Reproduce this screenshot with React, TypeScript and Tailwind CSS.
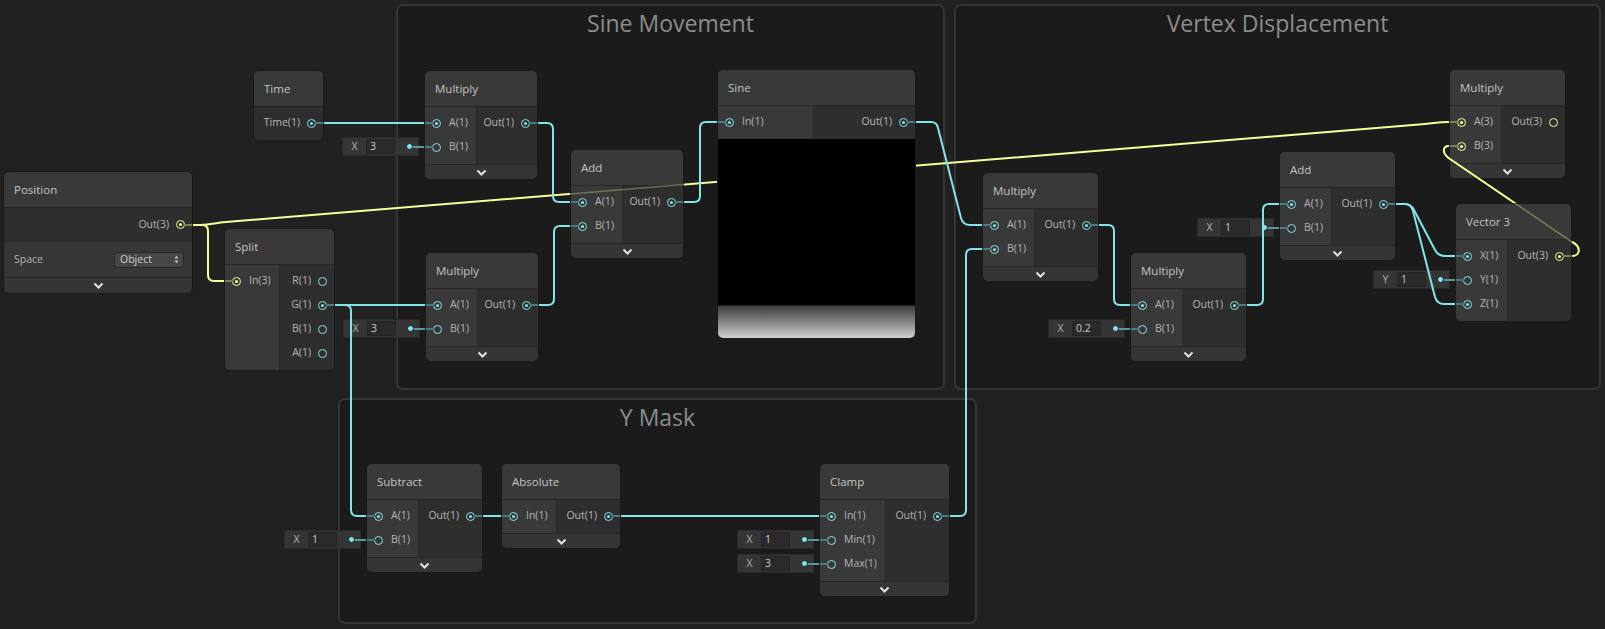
import React from 'react'

type Port = { label: string; v3?: boolean; on?: boolean; field?: [string, string] }
type NodeSpec = {
  title: string
  x: number
  y: number
  w: number
  col?: number
  ins?: Port[]
  outs: Port[]
  footer?: boolean
  preview?: boolean
}

const out1: Port[] = [{ label: 'Out(1)', on: true }]

const NODES: NodeSpec[] = [
  { title: 'Time', x: 253, y: 70, w: 71, outs: [{ label: 'Time(1)', on: true }] },
  {
    title: 'Split', x: 224, y: 228, w: 111, col: 55,
    ins: [{ label: 'In(3)', v3: true, on: true }],
    outs: [{ label: 'R(1)' }, { label: 'G(1)', on: true }, { label: 'B(1)' }, { label: 'A(1)' }],
  },
  { title: 'Multiply', x: 424, y: 70, w: 114, col: 52, ins: [{ label: 'A(1)', on: true }, { label: 'B(1)', field: ['X', '3'] }], outs: out1, footer: true },
  { title: 'Multiply', x: 425, y: 252, w: 114, col: 52, ins: [{ label: 'A(1)', on: true }, { label: 'B(1)', field: ['X', '3'] }], outs: out1, footer: true },
  { title: 'Add', x: 570, y: 149, w: 114, col: 52, ins: [{ label: 'A(1)', on: true }, { label: 'B(1)', on: true }], outs: out1, footer: true },
  { title: 'Sine', x: 717, y: 69, w: 199, col: 96, ins: [{ label: 'In(1)', on: true }], outs: out1, preview: true },
  { title: 'Multiply', x: 982, y: 172, w: 117, col: 52, ins: [{ label: 'A(1)', on: true }, { label: 'B(1)', on: true }], outs: out1, footer: true },
  { title: 'Multiply', x: 1130, y: 252, w: 117, col: 52, ins: [{ label: 'A(1)', on: true }, { label: 'B(1)', field: ['X', '0.2'] }], outs: out1, footer: true },
  { title: 'Add', x: 1279, y: 151, w: 117, col: 52, ins: [{ label: 'A(1)', on: true }, { label: 'B(1)', field: ['X', '1'] }], outs: out1, footer: true },
  {
    title: 'Multiply', x: 1449, y: 69, w: 117, col: 52,
    ins: [{ label: 'A(3)', v3: true, on: true }, { label: 'B(3)', v3: true, on: true }],
    outs: [{ label: 'Out(3)', v3: true }], footer: true,
  },
  {
    title: 'Vector 3', x: 1455, y: 203, w: 117, col: 52,
    ins: [{ label: 'X(1)', on: true }, { label: 'Y(1)', field: ['Y', '1'] }, { label: 'Z(1)', on: true }],
    outs: [{ label: 'Out(3)', v3: true, on: true }],
  },
  { title: 'Subtract', x: 366, y: 463, w: 117, col: 52, ins: [{ label: 'A(1)', on: true }, { label: 'B(1)', field: ['X', '1'] }], outs: out1, footer: true },
  { title: 'Absolute', x: 501, y: 463, w: 120, col: 55, ins: [{ label: 'In(1)', on: true }], outs: out1, footer: true },
  {
    title: 'Clamp', x: 819, y: 463, w: 131, col: 66,
    ins: [{ label: 'In(1)', on: true }, { label: 'Min(1)', field: ['X', '1'] }, { label: 'Max(1)', field: ['X', '3'] }],
    outs: out1, footer: true,
  },
]

const GROUPS = [
  { title: 'Sine Movement', x: 396, y: 4, w: 549, h: 386 },
  { title: 'Vertex Displacement', x: 954, y: 4, w: 647, h: 386 },
  { title: 'Y Mask', x: 338, y: 398, w: 639, h: 226 },
]

// wires drawn on top of the nodes
const CYAN_WIRES = [
  'M324,123 H424',
  'M538,123 H547 Q553,123 553,129 V196 Q553,202 559,202 H570',
  'M539,305 H548 Q554,305 554,299 V232 Q554,226 560,226 H570',
  'M684,202 H694 Q700,202 700,196 V128 Q700,122 706,122 H717',
  'M916,122 H931 Q937,122 938,128 L961,218 Q963,225 970,225 H982',
  'M335,305 H425',
  'M335,305 H345 Q351,305 351,311 V510 Q351,516 357,516 H366',
  'M1099,225 H1108 Q1114,225 1114,231 V299 Q1114,305 1120,305 H1130',
  'M1247,305 H1257 Q1263,305 1263,299 V210 Q1263,204 1269,204 H1279',
  'M1396,204 H1405 Q1411,204 1414,210 L1435,250 Q1438,256 1445,256 H1455',
  'M1396,204 H1405 Q1411,204 1413,211 L1435,297 Q1437,304 1444,304 H1455',
  'M483,516 H501',
  'M621,516 H819',
  'M950,516 H960 Q966,516 966,510 V255 Q966,249 972,249 H982',
]

const LONG_YELLOW = 'M193,225 H200 C212,225 214,223 226,222 L1425,124 C1436,123 1438,122 1449,122'
const SPLIT_YELLOW = 'M193,225 H202 Q208,225 208,231 V275 Q208,281 214,281 H224'
const LOOP_YELLOW = 'M1572,256 C1581,256 1581,246 1572,242 L1450,159 C1441,153 1443,146 1449,146'

function PortDot({ v3, on }: { v3?: boolean; on?: boolean }) {
  return (
    <span
      className={`flex h-[9px] w-[9px] shrink-0 items-center justify-center rounded-full border-[1.5px] ${
        v3 ? 'border-[#f6ff9a]' : 'border-[#84e4e7]'
      }`}>
      {on && <span className={`h-[3px] w-[3px] rounded-full ${v3 ? 'bg-[#f6ff9a]' : 'bg-[#84e4e7]'}`} />}
    </span>
  )
}

function Chevron() {
  return (
    <svg width="11" height="7" viewBox="0 0 11 7">
      <polyline points="1.5,1.5 5.5,5.5 9.5,1.5" fill="none" stroke="#e2e2e2" strokeWidth="2" />
    </svg>
  )
}

function InRow({ p }: { p: Port }) {
  return (
    <div className="relative flex h-[24px] items-center gap-[8px] pl-[7px]">
      {(p.on || p.field) && (
        <span className={`absolute left-0 top-[11px] h-[2px] w-[8px] ${p.v3 ? 'bg-[#7e8257]' : 'bg-[#4c7a7d]'}`} />
      )}
      <PortDot v3={p.v3} on={p.on} />
      <span className="text-[10.5px] text-[#b4b4b4]">{p.label}</span>
    </div>
  )
}

function OutRow({ p }: { p: Port }) {
  return (
    <div className="relative flex h-[24px] items-center justify-end gap-[7px] pr-[7px]">
      {p.on && (
        <span className={`absolute right-0 top-[11px] h-[2px] w-[8px] ${p.v3 ? 'bg-[#7e8257]' : 'bg-[#4c7a7d]'}`} />
      )}
      <span className="text-[10.5px] text-[#b4b4b4]">{p.label}</span>
      <PortDot v3={p.v3} on={p.on} />
    </div>
  )
}

function Node({ n }: { n: NodeSpec }) {
  return (
    <div
      className="absolute flex flex-col overflow-hidden rounded-[6px] border border-[#1a1a1a] bg-[#2e2e2e]"
      style={{ left: n.x, top: n.y, width: n.w }}>
      <div className="flex h-[36px] items-center border-b border-[#262626] bg-[#393939] px-[10px] text-[11.5px] text-[#c4c4c4]">
        {n.title}
      </div>
      <div className="flex">
        {n.ins && (
          <div className="shrink-0 border-r border-[#292929] bg-[#393939] pb-[5px] pt-[4px]" style={{ width: n.col }}>
            {n.ins.map((p, i) => <InRow key={i} p={p} />)}
          </div>
        )}
        <div className="flex-1 pb-[5px] pt-[4px]">
          {n.outs.map((p, i) => <OutRow key={i} p={p} />)}
        </div>
      </div>
      {n.preview && (
        <div className="relative h-[199px] bg-black">
          <div className="absolute bottom-0 left-0 right-0 h-[33px] border-t border-[#222] bg-linear-to-b from-[#3e3e3e] to-[#d2d2d2]" />
        </div>
      )}
      {n.footer && (
        <div className="flex h-[15px] items-center justify-center border-t border-[#262626] bg-[#353535]">
          <Chevron />
        </div>
      )}
    </div>
  )
}

function Field({ left, top, axis, value }: { left: number; top: number; axis: string; value: string }) {
  return (
    <div
      className="absolute flex h-[19px] w-[77px] items-center border border-[#2a2a2a] bg-[#353535]"
      style={{ left, top }}>
      <span className="w-[23px] text-center text-[10.5px] text-[#b4b4b4]">{axis}</span>
      <span className="h-[15px] w-[29px] border border-[#242424] bg-[#2a2a2a] pl-[3px] text-[10.5px] leading-[13px] text-[#c8c8c8]">
        {value}
      </span>
      <span className="absolute left-[68px] top-[7.5px] h-[2px] w-[13px] bg-[#5a989c]" />
      <span className="absolute left-[63px] top-[5px] h-[7px] w-[7px] rounded-full border-[1.5px] border-[#1e1e1e] bg-[#84e4e7]" />
    </div>
  )
}

function PositionNode() {
  return (
    <div className="absolute left-[3px] top-[171px] flex w-[190px] flex-col overflow-hidden rounded-[6px] border border-[#1a1a1a] bg-[#2e2e2e]">
      <div className="flex h-[36px] items-center border-b border-[#262626] bg-[#393939] px-[10px] text-[11.5px] text-[#c4c4c4]">
        Position
      </div>
      <div className="relative flex h-[34px] items-center justify-end gap-[7px] border-b border-[#262626] pr-[7px]">
        <span className="absolute right-0 top-[16px] h-[2px] w-[8px] bg-[#7e8257]" />
        <span className="text-[10.5px] text-[#b4b4b4]">Out(3)</span>
        <PortDot v3 on />
      </div>
      <div className="flex h-[36px] items-center justify-between border-b border-[#262626] bg-[#363636] pl-[10px] pr-[8px]">
        <span className="text-[10.5px] text-[#b4b4b4]">Space</span>
        <div className="flex h-[16px] w-[70px] items-center justify-between rounded-[3px] border border-[#272727] bg-[#454545] pl-[5px] pr-[4px]">
          <span className="text-[10.5px] leading-none text-[#cdcdcd]">Object</span>
          <svg width="5" height="9" viewBox="0 0 5 9">
            <polygon points="2.5,0.5 4.5,3.5 0.5,3.5" fill="#bdbdbd" />
            <polygon points="0.5,5.5 4.5,5.5 2.5,8.5" fill="#bdbdbd" />
          </svg>
        </div>
      </div>
      <div className="flex h-[15px] items-center justify-center bg-[#353535]">
        <Chevron />
      </div>
    </div>
  )
}

export default function App() {
  const fields: { left: number; top: number; axis: string; value: string }[] = []
  NODES.forEach(n =>
    n.ins?.forEach((p, i) => {
      if (p.field) fields.push({ left: n.x - 82, top: n.y + 53 + 24 * i - 10, axis: p.field[0], value: p.field[1] })
    }),
  )

  return (
    <div className="relative h-[629px] w-[1605px] overflow-hidden bg-[#212121] font-['Open_Sans','Noto_Sans',sans-serif]">
      {/* groups */}
      {GROUPS.map(g => (
        <div
          key={g.title}
          className="absolute rounded-[7px] border-2 border-[#353535] bg-[#1b1b1b]"
          style={{ left: g.x, top: g.y, width: g.w, height: g.h }}>
          <div className="mt-[2px] text-center text-[23px] leading-[30px] text-[#8c8c8c]">{g.title}</div>
        </div>
      ))}

      {/* wire that runs behind the nodes */}
      <svg className="absolute left-0 top-0" width="1605" height="629">
        <path d={LONG_YELLOW} fill="none" stroke="#f6ff9a" strokeWidth="2" />
      </svg>

      <PositionNode />
      {NODES.map((n, i) => <Node key={i} n={n} />)}
      {fields.map((f, i) => <Field key={i} {...f} />)}

      {/* wires on top */}
      <svg className="pointer-events-none absolute left-0 top-0" width="1605" height="629">
        <defs>
          <clipPath id="add1">
            <rect x="570" y="149" width="114" height="110" />
          </clipPath>
          <clipPath id="outsideVec">
            <rect x="0" y="0" width="1605" height="203" />
            <rect x="1572" y="0" width="40" height="629" />
          </clipPath>
          <clipPath id="insideVec">
            <rect x="1455" y="203" width="117" height="118" />
          </clipPath>
        </defs>
        <path d={LONG_YELLOW} fill="none" stroke="#f6ff9a" strokeOpacity="0.3" strokeWidth="1.5" clipPath="url(#add1)" />
        <path d={SPLIT_YELLOW} fill="none" stroke="#f6ff9a" strokeWidth="2" />
        {CYAN_WIRES.map((d, i) => (
          <path key={i} d={d} fill="none" stroke="#84e4e7" strokeWidth="2" />
        ))}
        <path d={LOOP_YELLOW} fill="none" stroke="#f6ff9a" strokeWidth="2" clipPath="url(#outsideVec)" />
        <path d={LOOP_YELLOW} fill="none" stroke="#f6ff9a" strokeOpacity="0.35" strokeWidth="1.5" clipPath="url(#insideVec)" />
      </svg>
    </div>
  )
}
